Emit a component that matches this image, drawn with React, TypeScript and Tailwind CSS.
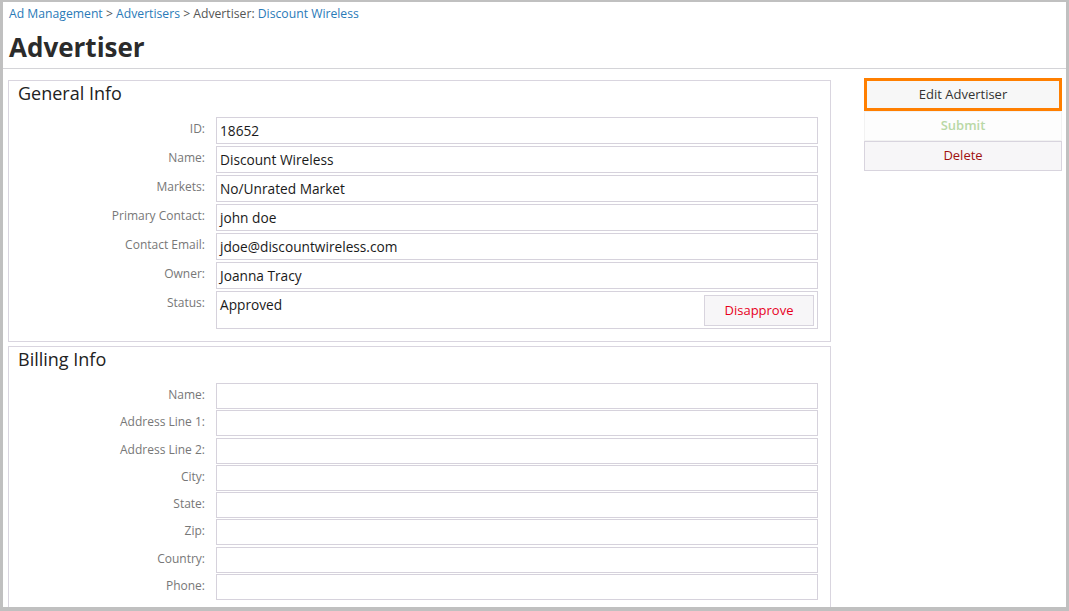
import React from 'react';

const general = [
    { label: 'ID:', value: '18652' },
    { label: 'Name:', value: 'Discount Wireless' },
    { label: 'Markets:', value: 'No/Unrated Market' },
    { label: 'Primary Contact:', value: 'john doe' },
    { label: 'Contact Email:', value: 'jdoe@discountwireless.com' },
    { label: 'Owner:', value: 'Joanna Tracy' },
];

const billing = ['Name:', 'Address Line 1:', 'Address Line 2:', 'City:', 'State:', 'Zip:', 'Country:', 'Phone:'];

function Row({ label, children, h }: { label: string; children?: React.ReactNode; h: string }) {
    return (
        <div className="flex items-start">
            <div className={`w-[187px] shrink-0 text-right text-[12px] text-[#777] ${h} leading-[24px]`}>{label}</div>
            <div className="ml-[11px] flex-1">{children}</div>
        </div>
    );
}

export default function App() {
    return (
        <div
            className="w-[1069px] h-[611px] overflow-hidden bg-white border-[#c0c0c0] border-l-[3px] border-r-[3px] border-t-[2px] border-b-[4px]"
            style={{ fontFamily: '"Open Sans", "Liberation Sans", sans-serif' }}
        >
            <div className="border-b border-[#d4d4d8] pl-[6px] pt-[2px] pb-[3px]">
                <div className="text-[12.2px] leading-[20px] text-[#555]">
                    <span className="text-[#2a7ab8]">Ad Management</span> &gt;{' '}
                    <span className="text-[#2a7ab8]">Advertisers</span> &gt; Advertiser:{' '}
                    <span className="text-[#2a7ab8]">Discount Wireless</span>
                </div>
                <h1 className="mt-[5px] text-[26px] leading-[36px] font-bold text-[#2b2b2b]">Advertiser</h1>
            </div>

            <div className="flex pl-[5px] pr-[4px]">
                <div className="w-[823px] shrink-0 pt-[11px]">
                    <div className="border border-[#d9d5df] pl-[9px] pr-[12px] pb-[12px]">
                        <h2 className="text-[18px] leading-[24px] text-[#222] mb-[12px]">General Info</h2>
                        <div className="flex flex-col gap-[2px]">
                            {general.map((r) => (
                                <Row key={r.label} label={r.label} h="h-[27px]">
                                    <div className="h-[27px] border border-[#d6d2dc] pl-[3px] text-[13.7px] leading-[25px] text-[#1a1a1a]">
                                        {r.value}
                                    </div>
                                </Row>
                            ))}
                            <Row label="Status:" h="h-[27px]">
                                <div className="h-[38px] border border-[#d6d2dc] pl-[3px] pr-[3px] pt-[3px] flex justify-between text-[13.7px] text-[#1a1a1a]">
                                    <span className="leading-[20px]">Approved</span>
                                    <button className="w-[110px] h-[31px] border border-[#d8d4de] bg-[#f7f6f8] text-[13px] text-[#e8001c]">
                                        Disapprove
                                    </button>
                                </div>
                            </Row>
                        </div>
                    </div>

                    <div className="mt-[4px] border border-[#d9d5df] pl-[9px] pr-[12px] pb-[12px]">
                        <h2 className="text-[18px] leading-[24px] text-[#222] mb-[12px]">Billing Info</h2>
                        <div className="flex flex-col gap-[1.3px]">
                            {billing.map((l) => (
                                <Row key={l} label={l} h="h-[26px]">
                                    <div className="h-[26px] border border-[#d6d2dc]" />
                                </Row>
                            ))}
                        </div>
                    </div>
                </div>

                <div className="ml-[33px] flex-1 pt-[9px] flex flex-col">
                    <button className="h-[33px] border-[3px] border-[#ff7f00] bg-[#f7f7f7] text-[13px] text-[#333]">
                        Edit Advertiser
                    </button>
                    <button className="h-[30px] border border-[#f2f2f2] bg-[#fdfdfd] text-[13px] font-semibold text-[#b9d8a6]">
                        Submit
                    </button>
                    <button className="h-[30px] border border-[#d8d4de] bg-[#f7f6f8] text-[13px] text-[#a01010]">
                        Delete
                    </button>
                </div>
            </div>
        </div>
    );
}
